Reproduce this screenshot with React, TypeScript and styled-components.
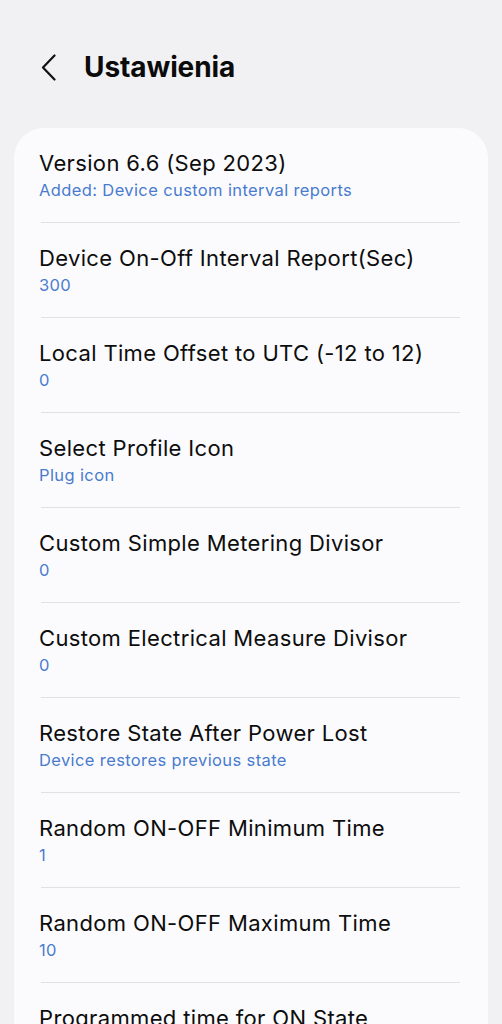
import React from 'react';
import styled, { createGlobalStyle } from 'styled-components';

const GlobalStyle = createGlobalStyle`
  html, body {
    margin: 0;
    padding: 0;
    background: #f1f1f3;
  }
  body {
    font-family: Inter, "Noto Sans", sans-serif;
    -webkit-font-smoothing: antialiased;
  }
`;

const Page = styled.div`
  width: 502px;
  min-height: 1024px;
  background: #f1f1f3;
  overflow: hidden;
`;

const Header = styled.header`
  display: flex;
  align-items: center;
  gap: 27px;
  height: 48px;
  padding: 43px 0 0 40px;
`;

const BackButton = styled.button`
  display: flex;
  align-items: center;
  justify-content: center;
  width: 17px;
  height: 30px;
  padding: 0;
  border: none;
  background: none;
  color: #111;
`;

const Title = styled.h1`
  margin: 0;
  font-size: 28px;
  font-weight: 700;
  color: #0b0b0b;
  letter-spacing: -0.1px;
`;

const Card = styled.section`
  margin: 37px 14px 0 14px;
  background: #fbfbfd;
  border-radius: 30px;
  padding: 0 28px 0 27px;
`;

const Row = styled.div<{ $last?: boolean }>`
  display: flex;
  flex-direction: column;
  padding: 20px 0 20px 0;
  border-bottom: ${p => (p.$last ? 'none' : '1px solid #e1e1e4')};
`;

const RowTitle = styled.div`
  font-size: 22px;
  line-height: 30px;
  color: #0d0d0d;
  margin-left: -2px;
  letter-spacing: 0.35px;
  white-space: nowrap;
`;

const RowValue = styled.div`
  font-size: 16.5px;
  line-height: 24px;
  color: #4a7bcf;
  margin-left: -2px;
  letter-spacing: 0.38px;
  white-space: nowrap;
`;

const items = [
  { title: 'Version 6.6 (Sep 2023)', value: 'Added: Device custom interval reports' },
  { title: 'Device On-Off Interval Report(Sec)', value: '300' },
  { title: 'Local Time Offset to UTC (-12 to 12)', value: '0' },
  { title: 'Select Profile Icon', value: 'Plug icon' },
  { title: 'Custom Simple Metering Divisor', value: '0' },
  { title: 'Custom Electrical Measure Divisor', value: '0' },
  { title: 'Restore State After Power Lost', value: 'Device restores previous state' },
  { title: 'Random ON-OFF Minimum Time', value: '1' },
  { title: 'Random ON-OFF Maximum Time', value: '10' },
  { title: 'Programmed time for ON State', value: '0' },
];

export default function App() {
  return (
    <Page>
      <GlobalStyle />
      <Header>
        <BackButton aria-label="Back">
          <svg width="15" height="27" viewBox="0 0 15 27" fill="none">
            <path d="M13.5 1.5 L2 13.5 L13.5 25.5" stroke="#111" strokeWidth="2.2" strokeLinecap="round" strokeLinejoin="round" />
          </svg>
        </BackButton>
        <Title>Ustawienia</Title>
      </Header>
      <Card>
        {items.map((item, i) => (
          <Row key={i} $last={i === items.length - 1}>
            <RowTitle>{item.title}</RowTitle>
            <RowValue>{item.value}</RowValue>
          </Row>
        ))}
      </Card>
    </Page>
  );
}
